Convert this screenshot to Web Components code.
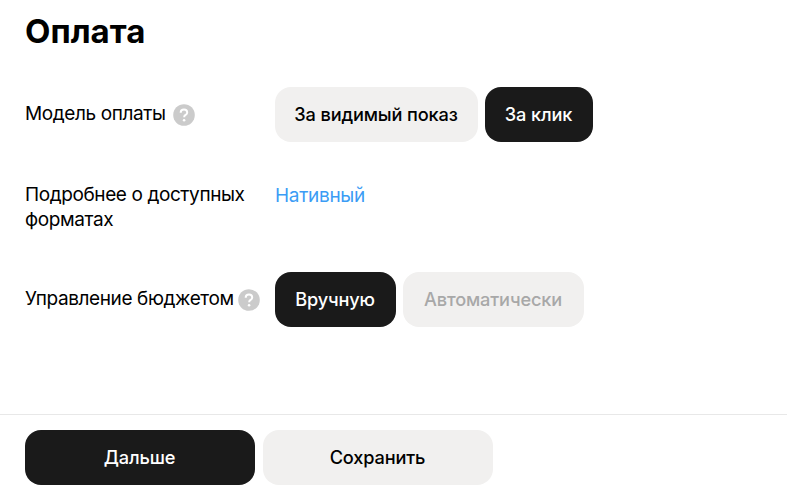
<!DOCTYPE html>
<html lang="ru">
<head>
<meta charset="utf-8">
<style>
  html, body { margin: 0; padding: 0; background: #fff; }
  body { font-family: Inter, "Noto Sans", sans-serif; color: #000; overflow: hidden; height: 494px; }
</style>
</head>
<body>
<payment-form></payment-form>
<script>
class HelpMark extends HTMLElement {
  constructor() {
    super()
    this.attachShadow({ mode: 'open' })
    this.shadowRoot.innerHTML = `
      <style>
        :host { display: inline-flex; width: 22px; height: 22px; }
        svg { display: block; }
      </style>
      <svg width="22" height="22" viewBox="0 0 22 22">
        <circle cx="11" cy="11" r="10.8" fill="#cbcbcb"/>
        <path d="M7.7 8.7c0-2 1.4-3.1 3.3-3.1s3.2 1.1 3.2 2.8c0 1.3-.8 2-1.6 2.5-.9.6-1.4 1-1.4 2v.4" fill="none" stroke="#fff" stroke-width="2"/>
        <circle cx="11.1" cy="16.2" r="1.3" fill="#fff"/>
      </svg>`
  }
}

class ChoiceButton extends HTMLElement {
  constructor() {
    super()
    this.attachShadow({ mode: 'open' })
    this.shadowRoot.innerHTML = `
      <style>
        :host {
          display: inline-flex;
          align-items: center;
          justify-content: center;
          box-sizing: border-box;
          height: 55px;
          padding: 0 1px 2px 0;
          border-radius: 16px;
          font-size: 18.2px;
          font-weight: 500;
          letter-spacing: -0.15px;
          background: #f1f0ef;
          color: #000;
          white-space: nowrap;
        }
        :host([active]) { background: #1a1a1a; color: #fff; }
        :host([disabled]) { color: #a8a8a8; }
      </style>
      <slot></slot>`
  }
}

class FormRow extends HTMLElement {
  constructor() {
    super()
    this.attachShadow({ mode: 'open' })
    this.shadowRoot.innerHTML = `
      <style>
        :host {
          display: grid;
          grid-template-columns: 250px 1fr;
          align-items: center;
          font-size: 19px;
          letter-spacing: -0.4px;
        }
        :host([top]) { align-items: start; }
        .label { display: flex; align-items: center; gap: 7px; line-height: 24.5px; white-space: nowrap; }
        .control { display: flex; gap: 7px; }
      </style>
      <div class="label"><slot name="label"></slot></div>
      <div class="control"><slot></slot></div>`
  }
}

class PaymentForm extends HTMLElement {
  constructor() {
    super()
    this.attachShadow({ mode: 'open' })
    this.shadowRoot.innerHTML = `
      <style>
        :host { display: flex; flex-direction: column; height: 494px; box-sizing: border-box; }
        .main { flex: 1; padding: 9px 25px 0; }
        h1 { margin: 0 0 34px; font-size: 33px; line-height: 44px; font-weight: 700; }
        .rows { display: flex; flex-direction: column; }
        .link { color: #3b9cf5; font-size: 19px; letter-spacing: -0.3px; line-height: 25px; }
        .footer { display: flex; gap: 8px; padding: 15px 25px 9px; border-top: 1px solid #e8e8e8; }
      </style>
      <div class="main">
        <h1>Оплата</h1>
        <div class="rows">
          <form-row style="margin-bottom:41px">
            <span slot="label">Модель оплаты</span>
            <help-mark slot="label"></help-mark>
            <choice-button style="width:203px">За видимый показ</choice-button>
            <choice-button style="width:108px" active>За клик</choice-button>
          </form-row>
          <form-row top style="margin-bottom:40px">
            <span slot="label">Подробнее о доступных<br>форматах</span>
            <span class="link">Нативный</span>
          </form-row>
          <form-row>
            <span slot="label">Управление бюджетом</span>
            <help-mark slot="label" style="margin-left:-3px"></help-mark>
            <choice-button style="width:121px" active>Вручную</choice-button>
            <choice-button style="width:181px" disabled>Автоматически</choice-button>
          </form-row>
        </div>
      </div>
      <div class="footer">
        <choice-button style="width:230px" active>Дальше</choice-button>
        <choice-button style="width:230px">Сохранить</choice-button>
      </div>`
  }
}

customElements.define('help-mark', HelpMark)
customElements.define('choice-button', ChoiceButton)
customElements.define('form-row', FormRow)
customElements.define('payment-form', PaymentForm)
</script>
</body>
</html>
